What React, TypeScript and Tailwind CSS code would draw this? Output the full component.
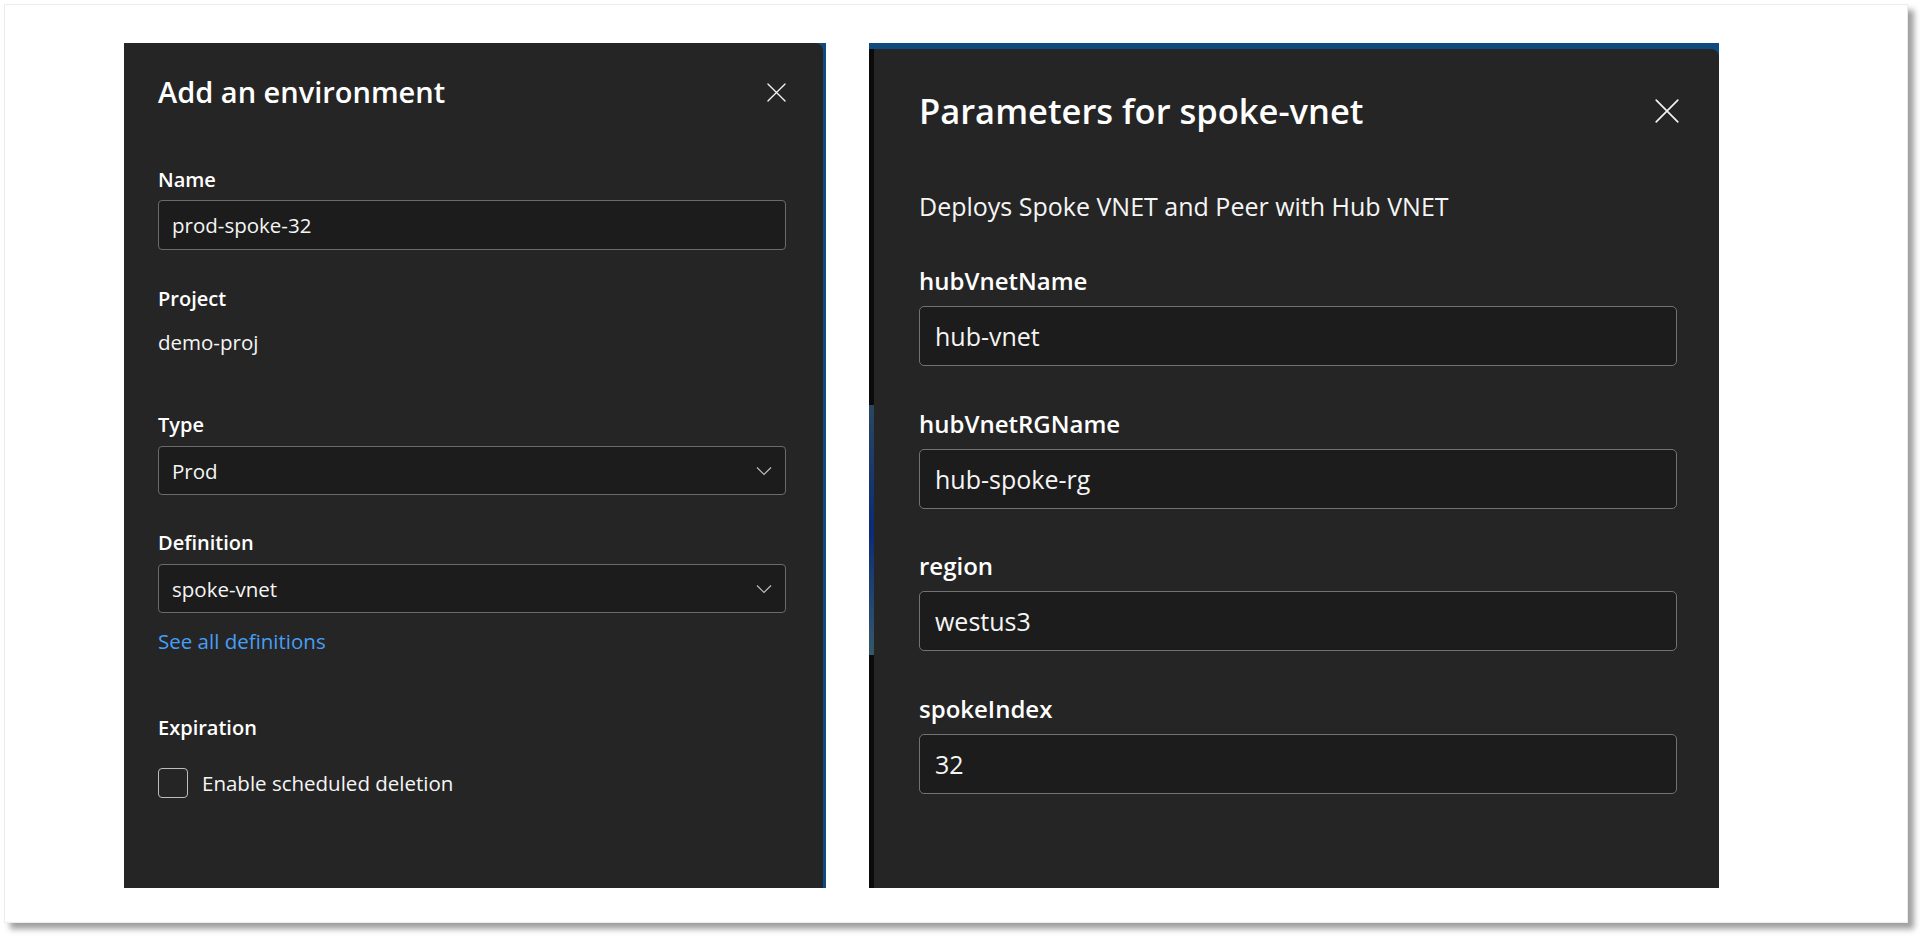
import type { ReactNode } from "react";

const font = "font-['Open_Sans',sans-serif]";

function CloseIcon({ size }: { size: number }) {
  return (
    <svg width={size} height={size} viewBox="0 0 20 20" fill="none" className="shrink-0">
      <path d="M1 1 L19 19 M19 1 L1 19" stroke="#f2f2f2" strokeWidth="1.4" strokeLinecap="round" />
    </svg>
  );
}

function Chevron() {
  return (
    <svg width="16" height="10" viewBox="0 0 16 10" fill="none">
      <path d="M1 1.5 L8 8.5 L15 1.5" stroke="#bdbdbd" strokeWidth="1.2" />
    </svg>
  );
}

function SmallLabel({ children, className = "" }: { children: ReactNode; className?: string }) {
  return <div className={`text-[20px] leading-[26px] font-semibold text-white ${className}`}>{children}</div>;
}

function SmallInput({ value, dropdown = false, className = "" }: { value: string; dropdown?: boolean; className?: string }) {
  return (
    <div className={`h-[49px] flex items-center justify-between pl-[13px] pr-[13px] bg-[#1c1c1c] border border-[#6b6b6b] rounded-[4px] ${className}`}>
      <span className="text-[20.5px] leading-[26px] text-[#f5f5f5]">{value}</span>
      {dropdown && <Chevron />}
    </div>
  );
}

function BigField({ label, value, first = false }: { label: string; value: string; first?: boolean }) {
  return (
    <div className={first ? "mt-[44px]" : "mt-[42.5px]"}>
      <div className="text-[24px] leading-[30px] font-semibold text-white mb-[10px]">{label}</div>
      <div className="h-[60px] flex items-center pl-[15px] bg-[#1c1c1c] border border-[#727272] rounded-[5px]">
        <span className="text-[25px] leading-[32px] text-[#f5f5f5]">{value}</span>
      </div>
    </div>
  );
}

function AddEnvironmentPanel() {
  return (
    <div className="w-[702px] h-[845px] shrink-0 bg-[#0f4b7e]">
      <div className="h-full mr-[3px] rounded-tr-[8px] bg-[#252525] pl-[34px] pr-[37px] pt-[31px]">
        <div className="h-[36px] flex items-center justify-between">
          <h1 className="text-[29px] leading-[36px] font-semibold text-white">Add an environment</h1>
          <CloseIcon size={19} />
        </div>

        <SmallLabel className="mt-[57px] mb-[7px]">Name</SmallLabel>
        <SmallInput value="prod-spoke-32" className="h-[50px]" />

        <SmallLabel className="mt-[36px]">Project</SmallLabel>
        <div className="mt-[17px] text-[20.5px] leading-[26px] text-[#f5f5f5]">demo-proj</div>

        <SmallLabel className="mt-[57px] mb-[8px]">Type</SmallLabel>
        <SmallInput value="Prod" dropdown />

        <SmallLabel className="mt-[35px] mb-[8px]">Definition</SmallLabel>
        <SmallInput value="spoke-vnet" dropdown />

        <div className="mt-[15px] text-[20.5px] leading-[26px] text-[#479ef5]">See all definitions</div>

        <SmallLabel className="mt-[61px]">Expiration</SmallLabel>

        <label className="mt-[27px] flex items-center gap-[14px] h-[30px]">
          <span className="w-[30px] h-[30px] rounded-[4px] border-[1.5px] border-[#bdbdbd] bg-transparent" />
          <span className="text-[20.5px] leading-[26px] text-[#f5f5f5]">Enable scheduled deletion</span>
        </label>
      </div>
    </div>
  );
}

function ParametersPanel() {
  return (
    <div className="w-[850px] h-[845px] shrink-0 bg-[#0f4b7e] pt-[6px] flex">
      <div className="w-[5px] h-full bg-[#0b0b0b] flex flex-col">
        <div className="h-[356px]" />
        <div className="h-[250px] bg-linear-to-b from-[#2a4660] via-[#0c2a78] to-[#36586a]" />
      </div>
      <div className="flex-1 h-full rounded-tr-[8px] bg-[#252525] pl-[45px] pr-[40px] pt-[40px]">
        <div className="h-[44px] flex items-center justify-between">
          <h2 className="text-[34.5px] leading-[44px] font-semibold text-white">Parameters for spoke-vnet</h2>
          <CloseIcon size={24} />
        </div>

        <p className="mt-[57px] text-[25px] leading-[32px] text-[#f5f5f5]">Deploys Spoke VNET and Peer with Hub VNET</p>

        <div className="mr-[2px]">
          <BigField label="hubVnetName" value="hub-vnet" first />
          <BigField label="hubVnetRGName" value="hub-spoke-rg" />
          <BigField label="region" value="westus3" />
          <BigField label="spokeIndex" value="32" />
        </div>
      </div>
    </div>
  );
}

export default function App() {
  return (
    <div className={`w-[1921px] h-[937px] bg-white overflow-hidden ${font}`}>
      <div className="ml-[4px] mt-[4px] w-[1904px] h-[919px] bg-white border border-[#ececec] shadow-[6px_6px_6px_rgba(0,0,0,0.38)] pl-[119px] pt-[38px] flex gap-[43px]">
        <AddEnvironmentPanel />
        <ParametersPanel />
      </div>
    </div>
  );
}
